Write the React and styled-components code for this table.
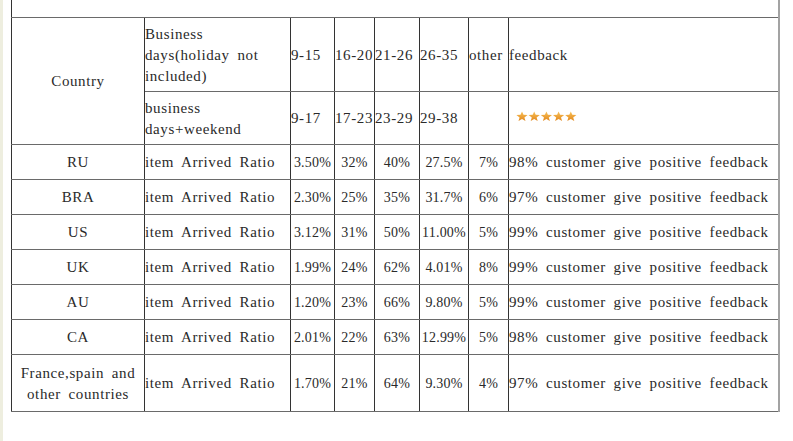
import React from "react";
import styled, { createGlobalStyle } from "styled-components";

const GlobalStyle = createGlobalStyle`
  html, body {
    margin: 0;
    padding: 0;
    background: #ffffff;
  }
`;

const Page = styled.div`
  min-height: 441px;
  border-left: 3px solid #eeeedf;
  padding-left: 8px;
  box-sizing: border-box;
  font-family: "Liberation Serif", "DejaVu Serif", serif;
  font-size: 15px;
  letter-spacing: 0.6px;
  word-spacing: 3.4px;
  line-height: 21px;
  color: #2a2a2a;
`;

const Table = styled.table`
  border-collapse: collapse;
  table-layout: fixed;
  width: 767px;
`;

const Row = styled.tr`
  height: ${({ h }) => h}px;
`;

const Cell = styled.td`
  padding: 2px 0 0 ${({ pad }) => pad || 0}px;
  vertical-align: middle;
  text-align: ${({ align }) => align || "left"};
  white-space: ${({ wrap }) => (wrap ? "normal" : "nowrap")};
  border-top: 1px solid #6a6a6a;
  border-bottom: 1px solid #6a6a6a;
  border-left: 1px solid ${({ soft }) => (soft ? "#7a7a7a" : "#333333")};
  border-right: 1px solid #333333;
  overflow: hidden;
`;

const NumCell = styled(Cell)`
  text-align: center;
  font-size: 14px;
  letter-spacing: 0.2px;
`;

const EdgeCell = styled(Cell)`
  border-right: 2px solid #a3a3a3;
`;

const TopCell = styled.td`
  padding: 0;
  border-left: 1px solid #333333;
  border-right: 2px solid #a3a3a3;
  border-bottom: 1px solid #6a6a6a;
`;

const Stars = () => (
  <svg width="62" height="10" viewBox="0 0 62 10" style={{ display: "block", marginTop: -6 }}>
    <defs>
      <linearGradient id="sg" x1="0" y1="0" x2="0" y2="1">
        <stop offset="0" stopColor="#f8c25a" />
        <stop offset="1" stopColor="#e2871c" />
      </linearGradient>
    </defs>
    {[0, 1, 2, 3, 4].map((i) => (
      <polygon
        key={i}
        transform={`translate(${i * 12.2 + 6},5.4)`}
        points="0,-5 1.5,-1.6 5.6,-1.5 2.4,1 3.5,4.6 0,2.6 -3.5,4.6 -2.4,1 -5.6,-1.5 -1.5,-1.6"
        fill="url(#sg)"
      />
    ))}
  </svg>
);

const widths = [133, 146, 44, 40, 45, 49, 40, 270];

const rows = [
  ["RU", "3.50%", "32%", "40%", "27.5%", "7%", "98%"],
  ["BRA", "2.30%", "25%", "35%", "31.7%", "6%", "97%"],
  ["US", "3.12%", "31%", "50%", "11.00%", "5%", "99%"],
  ["UK", "1.99%", "24%", "62%", "4.01%", "8%", "99%"],
  ["AU", "1.20%", "23%", "66%", "9.80%", "5%", "99%"],
  ["CA", "2.01%", "22%", "63%", "12.99%", "5%", "98%"],
  ["France,spain and other countries", "1.70%", "21%", "64%", "9.30%", "4%", "97%"],
];

export default function App() {
  return (
    <>
      <GlobalStyle />
      <Page>
        <Table>
          <colgroup>
            {widths.map((w, i) => (
              <col key={i} style={{ width: w }} />
            ))}
          </colgroup>
          <tbody>
            <Row h={17}>
              <TopCell colSpan={8} />
            </Row>
            <Row h={74}>
              <Cell rowSpan={2} align="center">Country</Cell>
              <Cell wrap>
                Business
                <br />
                days(holiday not
                <br />
                included)
              </Cell>
              <Cell>9-15</Cell>
              <Cell>16-20</Cell>
              <Cell>21-26</Cell>
              <Cell>26-35</Cell>
              <Cell soft>other</Cell>
              <EdgeCell>feedback</EdgeCell>
            </Row>
            <Row h={53}>
              <Cell wrap>
                business
                <br />
                days+weekend
              </Cell>
              <Cell>9-17</Cell>
              <Cell>17-23</Cell>
              <Cell>23-29</Cell>
              <Cell>29-38</Cell>
              <Cell soft />
              <EdgeCell pad={7}>
                <Stars />
              </EdgeCell>
            </Row>
            {rows.map((r, i) => (
              <Row h={i === rows.length - 1 ? 57 : 35} key={r[0]}>
                <Cell align="center" wrap>{r[0]}</Cell>
                <Cell>item Arrived Ratio</Cell>
                <NumCell>{r[1]}</NumCell>
                <NumCell>{r[2]}</NumCell>
                <NumCell>{r[3]}</NumCell>
                <NumCell>{r[4]}</NumCell>
                <NumCell soft>{r[5]}</NumCell>
                <EdgeCell>{r[6]} customer give positive feedback</EdgeCell>
              </Row>
            ))}
          </tbody>
        </Table>
      </Page>
    </>
  );
}
